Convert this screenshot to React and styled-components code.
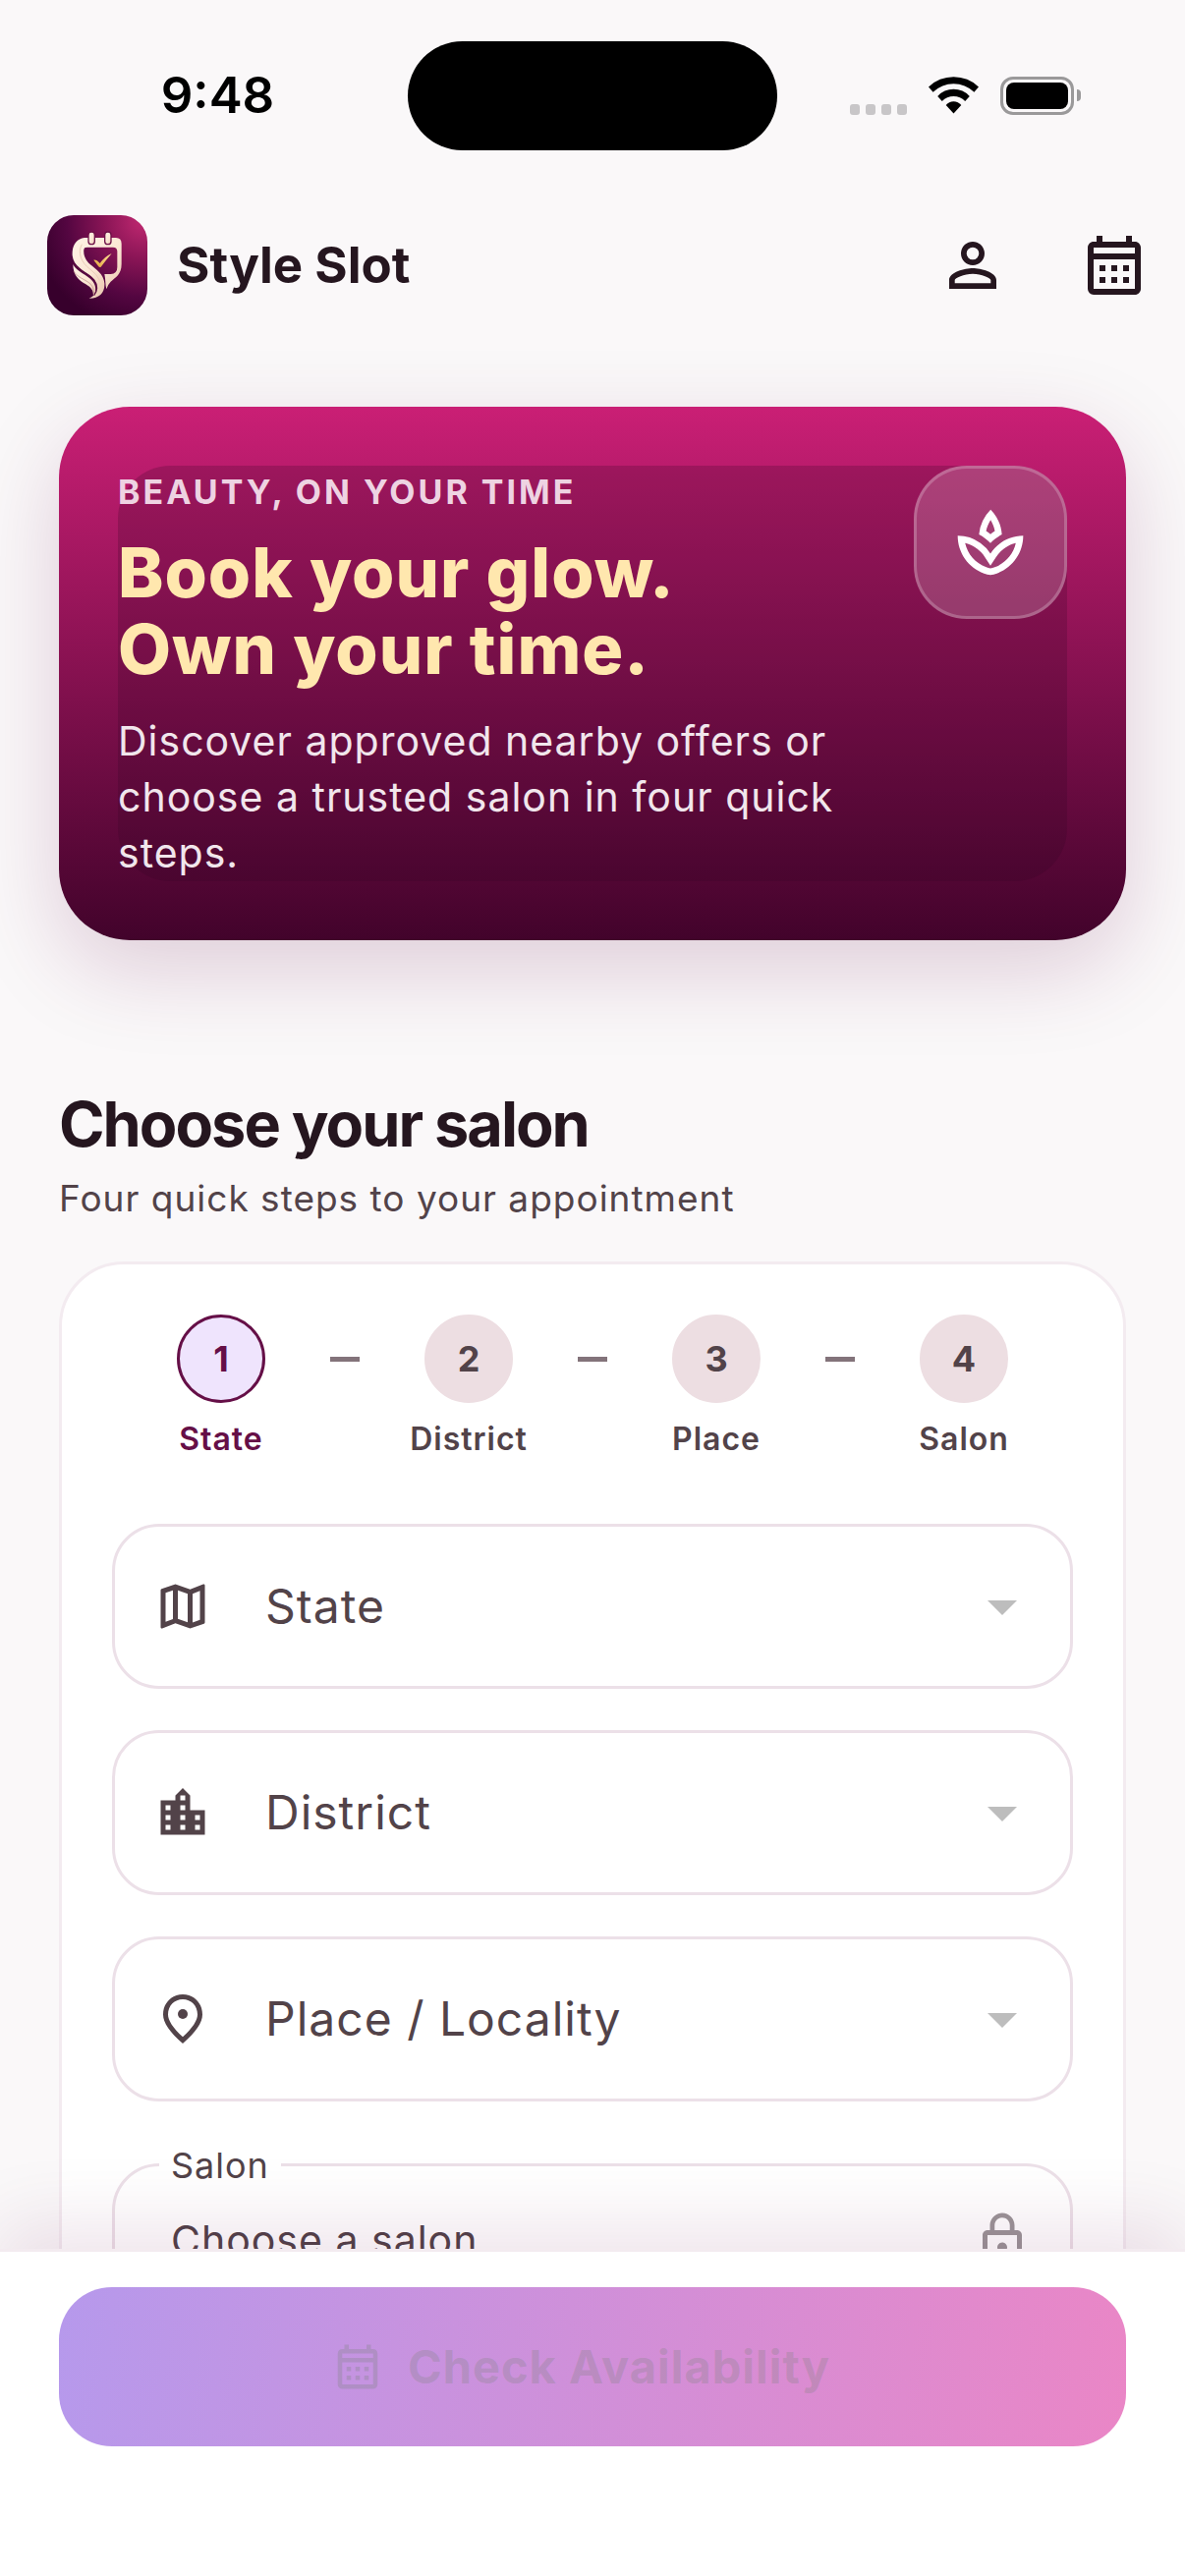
import React from "react";
import styled, { createGlobalStyle } from "styled-components";
import {
  MdPersonOutline,
  MdOutlineSpa,
  MdOutlineMap,
  MdLocationCity,
  MdLockOutline,
  MdArrowDropDown,
} from "react-icons/md";

const color = {
  ink: "#25161f",
  muted: "#524349",
  plum: "#650f47",
  surface: "#faf8f9",
  card: "#ffffff",
  cardLine: "#f3ebf0",
  fieldLine: "#ece0e8",
  cream: "#ffe7ae",
};

const GlobalStyle = createGlobalStyle`
  *, *::before, *::after { box-sizing: border-box; }
  body {
    margin: 0;
    background: ${color.surface};
    color: ${color.ink};
    font-family: Inter, Roboto, "Liberation Sans", sans-serif;
  }
  h1, h2, p, ol { margin: 0; padding: 0; }
  button, select { font: inherit; letter-spacing: inherit; }
`;

const Screen = styled.div`
  display: flex;
  flex-direction: column;
  height: 100vh;
  overflow: hidden;
`;

/* Status bar */

const StatusBar = styled.div`
  display: grid;
  grid-template-columns: 1fr 376px 1fr;
  align-items: center;
  height: 186px;
  padding-top: 8px;
  flex: none;
  color: #000;
`;

const Clock = styled.time`
  justify-self: center;
  padding-left: 28px;
  font-size: 51px;
  line-height: 60px;
  font-weight: 600;
`;

const Island = styled.div`
  height: 111px;
  border-radius: 56px;
  background: #000;
`;

const StatusIcons = styled.div`
  display: flex;
  align-items: center;
  gap: 22px;
  justify-self: start;
  padding-left: 74px;
`;

const SignalDots = styled.div`
  display: flex;
  align-self: flex-end;
  gap: 6px;

  i {
    width: 10px;
    height: 11px;
    border-radius: 3px;
    background: #c8c6c8;
  }
`;

const Battery = styled.div`
  display: flex;
  align-items: center;
  gap: 3px;
`;

const BatteryShell = styled.div`
  width: 75px;
  height: 39px;
  padding: 3px;
  border: 3px solid #9a999a;
  border-radius: 13px;

  &::before {
    content: "";
    display: block;
    height: 100%;
    border-radius: 8px;
    background: #000;
  }
`;

const BatteryNub = styled.div`
  width: 4px;
  height: 12px;
  border-radius: 0 4px 4px 0;
  background: #9a999a;
`;

/* App bar */

const AppBar = styled.header`
  display: flex;
  align-items: center;
  height: 168px;
  padding-left: 48px;
  flex: none;
`;

const Logo = styled.svg`
  width: 102px;
  height: 102px;
  border-radius: 27px;
`;

const AppName = styled.h1`
  flex: 1;
  margin-left: 30px;
  font-size: 51px;
  line-height: 60px;
  font-weight: 700;
`;

const IconButton = styled.button`
  display: grid;
  place-items: center;
  width: 144px;
  height: 144px;
  padding: 0;
  border: 0;
  background: none;
  color: ${color.ink};
  font-size: 72px;
`;

/* Scrolling content */

const Content = styled.main`
  flex: 1;
  min-height: 0;
  overflow: hidden auto;
  scrollbar-width: none;
  padding: 60px 60px 0;
`;

const Hero = styled.section`
  padding: 60px;
  border-radius: 72px;
  background: linear-gradient(#ca1f75, #42032b);
  box-shadow: 0 30px 90px rgba(101, 13, 71, 0.18);
`;

const HeroPanel = styled.div`
  display: flex;
  align-items: flex-start;
  gap: 36px;
  border-radius: 54px;
  background: rgba(50, 6, 36, 0.22);
`;

const HeroCopy = styled.div`
  flex: 1;
`;

const Eyebrow = styled.p`
  font-size: 34px;
  line-height: 54px;
  font-weight: 700;
  letter-spacing: 3px;
  text-transform: uppercase;
  color: #eed3e2;
`;

const HeroTitle = styled.h2`
  margin-top: 16px;
  font-size: 70px;
  line-height: 78px;
  font-weight: 800;
  letter-spacing: 1px;
  color: ${color.cream};
`;

const HeroText = styled.p`
  margin-top: 26px;
  font-size: 41px;
  line-height: 57px;
  letter-spacing: 1px;
  color: #f1e6ec;
`;

const HeroBadge = styled.div`
  display: grid;
  place-items: center;
  width: 156px;
  height: 156px;
  border: 3px solid rgba(255, 255, 255, 0.22);
  border-radius: 54px;
  background: rgba(255, 255, 255, 0.18);
  color: #fff;
  font-size: 80px;
`;

const SectionTitle = styled.h2`
  margin-top: 147px;
  font-size: 63px;
  line-height: 80px;
  font-weight: 700;
  letter-spacing: -2px;
`;

const SectionHint = styled.p`
  margin-top: 12px;
  font-size: 37px;
  line-height: 48px;
  letter-spacing: 1px;
  color: ${color.muted};
`;

const Card = styled.form`
  margin-top: 40px;
  padding: 51px;
  border: 3px solid ${color.cardLine};
  border-radius: 66px;
  background: ${color.card};
`;

const Steps = styled.ol`
  display: flex;
  justify-content: center;
  list-style: none;
`;

const Step = styled.li`
  display: flex;
  flex-direction: column;
  align-items: center;
  gap: 16px;
  width: 126px;
  font-size: 32px;
  line-height: 42px;
  font-weight: 600;
  letter-spacing: 1px;
  color: ${(p) => (p.$active ? color.plum : color.muted)};
`;

const StepNumber = styled.span`
  display: grid;
  place-items: center;
  width: 90px;
  height: 90px;
  border-radius: 50%;
  border: 3px solid ${(p) => (p.$active ? color.plum : "#eddee2")};
  background: ${(p) => (p.$active ? "#efe4fd" : "#eddee2")};
  font-size: 36px;
  font-weight: 700;
  letter-spacing: 0;
`;

const StepDash = styled.li`
  display: grid;
  place-items: center;
  width: 126px;
  height: 90px;

  &::before {
    content: "";
    width: 30px;
    height: 5px;
    background: #83737a;
  }
`;

const Fields = styled.div`
  display: flex;
  flex-direction: column;
  gap: 42px;
  margin-top: 65px;
`;

const Field = styled.div`
  position: relative;
  display: flex;
  align-items: center;
  height: ${(p) => (p.$outlined ? 156 : 168)}px;
  margin-top: ${(p) => (p.$outlined ? 21 : 0)}px;
  padding: 0 33px 0 ${(p) => (p.$outlined ? 57 : 39)}px;
  border: 3px solid ${color.fieldLine};
  border-radius: 48px;
  color: ${color.muted};
`;

const LeadIcon = styled.span`
  display: flex;
  margin-right: 54px;
  font-size: 60px;
`;

const TrailIcon = styled.span`
  display: grid;
  place-items: center;
  width: 72px;
  pointer-events: none;
  font-size: ${(p) => (p.$small ? 60 : 72)}px;
  color: ${(p) => (p.$small ? "#9b9598" : "#bdbdbd")};
`;

const Select = styled.select`
  flex: 1;
  min-width: 0;
  padding: 0;
  border: 0;
  outline: 0;
  appearance: none;
  background: none;
  color: ${color.muted};
  font-size: ${(p) => (p.$small ? 41 : 48)}px;
  line-height: 60px;
  letter-spacing: 1px;
  opacity: 1;
`;

const FloatingLabel = styled.label`
  position: absolute;
  top: -22px;
  left: 45px;
  padding: 0 12px;
  background: ${color.card};
  font-size: 36px;
  line-height: 42px;
  letter-spacing: 1px;
`;

/* Bottom bar */

const BottomBar = styled.footer`
  position: relative;
  flex: none;
  padding: 36px 60px 132px;
  border-top: 3px solid ${color.cardLine};
  background: #fff;
  box-shadow: 0 -24px 72px rgba(101, 13, 71, 0.11);
`;

const PrimaryButton = styled.button`
  display: flex;
  align-items: center;
  justify-content: center;
  gap: 24px;
  width: 100%;
  height: 162px;
  padding: 0 24px 0 0;
  border: 0;
  border-radius: 54px;
  background: linear-gradient(98deg, #b699ec, #ea86c6);
  color: rgba(120, 130, 120, 0.27);
  font-size: 47px;
  line-height: 60px;
  font-weight: 700;
  letter-spacing: 1px;

  svg {
    width: 54px;
    height: 54px;
  }
`;

function CalendarIcon() {
  return (
    <svg width="1em" height="1em" viewBox="0 0 24 24" fill="currentColor" aria-hidden="true">
      <path d="M19 4h-1V2h-2v2H8V2H6v2H5c-1.11 0-1.99.9-1.99 2L3 20a2 2 0 0 0 2 2h14c1.1 0 2-.9 2-2V6c0-1.1-.9-2-2-2zm0 16H5V10h14v10zm0-12H5V6h14v2zM9 14H7v-2h2v2zm4 0h-2v-2h2v2zm4 0h-2v-2h2v2zm-8 4H7v-2h2v2zm4 0h-2v-2h2v2zm4 0h-2v-2h2v2z" />
    </svg>
  );
}

function PinIcon() {
  return (
    <svg width="1em" height="1em" viewBox="0 0 24 24" fill="currentColor" aria-hidden="true">
      <path
        fillRule="evenodd"
        d="M12 2C7.8 2 4 5.22 4 10.2c0 3.32 2.67 7.25 8 11.8 5.33-4.55 8-8.48 8-11.8C20 5.22 16.2 2 12 2zm0 2c3.35 0 6 2.57 6 6.2 0 2.34-1.95 5.44-6 9.14-4.05-3.7-6-6.79-6-9.14C6 6.57 8.65 4 12 4z"
      />
      <circle cx="12" cy="10" r="2" />
    </svg>
  );
}

function WifiIcon() {
  return (
    <svg width="51" height="38" viewBox="0 0 51 38" aria-hidden="true">
      <path d="M0 10.5A36.7 36.7 0 0 1 51 10.5L46.4 15.7A30.2 30.2 0 0 0 4.6 15.7Z" />
      <path d="M9.2 20A21.8 21.8 0 0 1 41.8 20L37.2 25A16.2 16.2 0 0 0 13.8 25Z" />
      <path d="M17.7 29A10 10 0 0 1 33.3 29L25.5 37.5Z" />
    </svg>
  );
}

function LogoMark() {
  return (
    <Logo viewBox="54 57 306 306" role="img" aria-label="Style Slot logo">
      <defs>
        <radialGradient id="logoBg" gradientUnits="userSpaceOnUse" cx="345" cy="75" r="330">
          <stop offset="0" stopColor="#bf2870" />
          <stop offset="0.35" stopColor="#8a1556" />
          <stop offset="0.7" stopColor="#540641" />
          <stop offset="1" stopColor="#37002c" />
        </radialGradient>
        <linearGradient id="logoCream" x1="0" y1="0" x2="1" y2="1">
          <stop offset="0" stopColor="#fff4e6" />
          <stop offset="0.6" stopColor="#fbe6d3" />
          <stop offset="1" stopColor="#e8c4ad" />
        </linearGradient>
        <linearGradient id="logoGold" x1="0" y1="1" x2="1" y2="0">
          <stop offset="0" stopColor="#e0a23a" />
          <stop offset="1" stopColor="#ffe39a" />
        </linearGradient>
      </defs>
      <rect x="54" y="57" width="306" height="306" fill="url(#logoBg)" />
      <g fill="url(#logoCream)">
        <path
          fillRule="evenodd"
          d="M168 126H264Q281 126 281 144V206C281 238 262 247 248 260Q239 269 235 283C231 270 233 256 229 237H248Q268 236 268 216V168Q268 155 255 155H176Q160 155 166 172L150 160Z"
        />
        <path d="M168 126C142 129 129 152 131 180C134 213 166 226 190 246C212 266 211 298 182 311C212 312 231 294 229 265C227 236 202 222 185 207C170 194 161 172 168 155L180 140Z" />
        <path d="M133 207C144 231 176 237 193 259C205 275 204 292 195 304C196 286 187 277 172 268C150 256 133 240 133 207Z" />
      </g>
      <path d="M133 202C145 227 178 232 197 255C209 271 208 290 197 302" fill="none" stroke="#5b0b40" strokeWidth="4" />
      <path d="M135 228C146 248 172 253 187 268Q198 280 196 300" fill="none" stroke="#b98a86" strokeWidth="2" />
      <path d="M160 146C146 172 158 202 185 222Q207 238 214 256" fill="none" stroke="#e9cdb8" strokeWidth="3" />
      <g fill="url(#logoCream)" stroke="#6e1148" strokeWidth="4">
        <rect x="180" y="108" width="19" height="38" rx="9" />
        <rect x="230" y="108" width="19" height="38" rx="9" />
      </g>
      <path d="M196 194Q204 192 215 204Q230 183 251 174Q234 194 218 215Q214 218 211 214Z" fill="url(#logoGold)" />
    </Logo>
  );
}

const steps = ["State", "District", "Place", "Salon"];

const pickers = [
  { id: "state", name: "State", icon: <MdOutlineMap /> },
  { id: "district", name: "District", icon: <MdLocationCity /> },
  { id: "place", name: "Place / Locality", icon: <PinIcon /> },
];

export default function App() {
  return (
    <Screen>
      <GlobalStyle />
      <StatusBar>
        <Clock>9:48</Clock>
        <Island />
        <StatusIcons>
          <SignalDots>
            <i />
            <i />
            <i />
            <i />
          </SignalDots>
          <WifiIcon />
          <Battery>
            <BatteryShell />
            <BatteryNub />
          </Battery>
        </StatusIcons>
      </StatusBar>

      <AppBar>
        <LogoMark />
        <AppName>Style Slot</AppName>
        <IconButton type="button" aria-label="Profile">
          <MdPersonOutline />
        </IconButton>
        <IconButton type="button" aria-label="Bookings">
          <CalendarIcon />
        </IconButton>
      </AppBar>

      <Content>
        <Hero>
          <HeroPanel>
            <HeroCopy>
              <Eyebrow>Beauty, on your time</Eyebrow>
              <HeroTitle>
                Book your glow.
                <br />
                Own your time.
              </HeroTitle>
              <HeroText>
                Discover approved nearby offers or choose a trusted salon in four quick steps.
              </HeroText>
            </HeroCopy>
            <HeroBadge>
              <MdOutlineSpa />
            </HeroBadge>
          </HeroPanel>
        </Hero>

        <SectionTitle>Choose your salon</SectionTitle>
        <SectionHint>Four quick steps to your appointment</SectionHint>

        <Card>
          <Steps>
            {steps.map((name, i) => (
              <React.Fragment key={name}>
                {i > 0 && <StepDash aria-hidden="true" />}
                <Step $active={i === 0}>
                  <StepNumber $active={i === 0}>{i + 1}</StepNumber>
                  {name}
                </Step>
              </React.Fragment>
            ))}
          </Steps>

          <Fields>
            {pickers.map(({ id, name, icon }) => (
              <Field key={id}>
                <LeadIcon>{icon}</LeadIcon>
                <Select id={id} aria-label={name}>
                  <option>{name}</option>
                </Select>
                <TrailIcon>
                  <MdArrowDropDown />
                </TrailIcon>
              </Field>
            ))}
            <Field $outlined>
              <FloatingLabel htmlFor="salon">Salon</FloatingLabel>
              <Select id="salon" $small disabled>
                <option>Choose a salon</option>
              </Select>
              <TrailIcon $small>
                <MdLockOutline />
              </TrailIcon>
            </Field>
          </Fields>
        </Card>
      </Content>

      <BottomBar>
        <PrimaryButton type="button" disabled>
          <CalendarIcon />
          Check Availability
        </PrimaryButton>
      </BottomBar>
    </Screen>
  );
}
